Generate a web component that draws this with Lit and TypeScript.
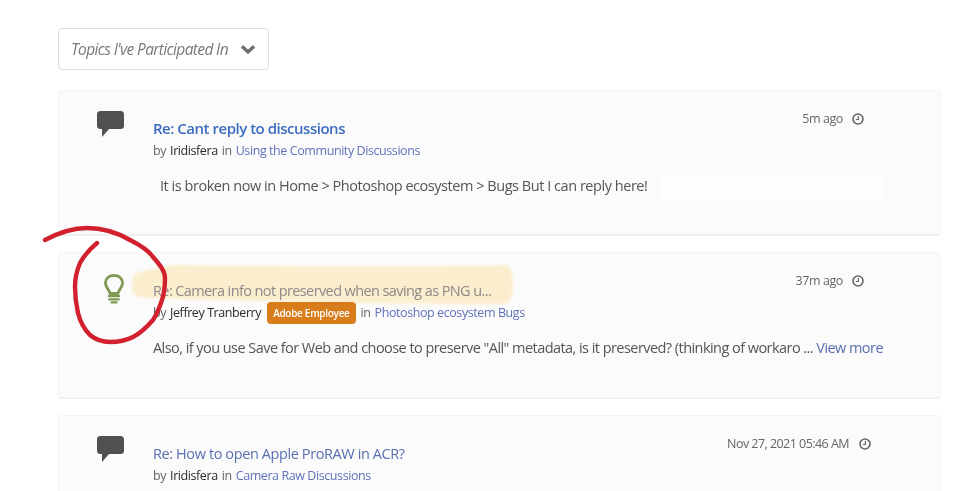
import { LitElement, html, css, svg } from "lit";
import { customElement } from "lit/decorators.js";

const clock = html`<svg class="clock" viewBox="0 0 12 12" aria-hidden="true"><circle cx="6" cy="6" r="5" fill="none" stroke="#666" stroke-width="1.6"/><path d="M6.4 2.9V6.5H3.8" fill="none" stroke="#666" stroke-width="1.2"/></svg>`;
const bubble = html`<svg class="icon bubble" viewBox="0 0 27 27" aria-hidden="true"><path d="M3.5 0H23.5Q27 0 27 3.5V14.5Q27 18 23.5 18H12L5 26V18H3.5Q0 18 0 14.5V3.5Q0 0 3.5 0Z" fill="#505050"/></svg>`;
const bulb = html`<svg class="icon bulb" viewBox="0 0 20 30" aria-hidden="true"><path d="M6 19.5C5.5 15.5 1.4 14 1.4 8.8C1.4 4.4 5 1.4 10 1.4C15 1.4 18.6 4.4 18.6 8.8C18.6 14 14.5 15.5 14 19.5Z" fill="none" stroke="#7f9a55" stroke-width="2.8" stroke-linejoin="round"/><path d="M4.8 22.2H15.2M5.2 25.4H14.8M7.5 28.4H12.5" fill="none" stroke="#7f9a55" stroke-width="2.2" stroke-linecap="round"/></svg>`;

@customElement("app-root")
export class AppRoot extends LitElement {
  static styles = css`
    :host { display: block; position: relative; height: 491px; overflow: hidden; background: #fff; font-family: "Open Sans", "Liberation Sans", sans-serif; color: #555; }
    .page { padding: 28px 36px 0 58px; display: flex; flex-direction: column; align-items: stretch; }
    .select { align-self: flex-start; box-sizing: border-box; width: 211px; height: 42px; display: flex; align-items: center; justify-content: space-between; padding: 0 12px; border: 1px solid #dedede; border-radius: 4px; font-style: italic; font-size: 15.5px; letter-spacing: -0.62px; color: #7a7a7a; margin-bottom: 20px; }
    .chev { width: 16px; height: 11px; }
    .card { position: relative; box-sizing: border-box; min-height: 146px; margin-bottom: 16px; display: flex; padding: 20px 0 0 38px; background: #fbfbfb; border: 1px solid #f4f4f4; border-bottom: 2px solid #f0f0f0; border-radius: 4px; }
    .card.tall { min-height: 147px; }
    .iconcol { width: 56px; flex: none; }
    .icon { display: block; }
    .bubble { width: 27px; height: 27px; }
    .bulb { width: 20px; height: 30px; margin: 1px 0 0 7px; }
    .main { flex: 1; min-width: 0; }
    .head { display: flex; justify-content: space-between; align-items: flex-start; }
    .title { font-size: 14.5px; line-height: 20px; margin-top: 8px; letter-spacing: -0.4px; color: #5a6fb0; }
    .title.bold { font-size: 15px; font-weight: 600; color: #3b6cc0; letter-spacing: -0.48px; margin-top: 7px; margin-bottom: 1px; }
    .title.faded { color: #8e90a8; letter-spacing: -0.6px; }
    .sub { font-size: 12.5px; line-height: 24px; letter-spacing: -0.42px; color: #666; display: flex; align-items: center; gap: 4px; white-space: pre; }
    .name { color: #2c2c2c; }
    .link { color: #6072bb; }
    .badge { background: #d97d1c; color: #fff; font-size: 10px; font-weight: 600; line-height: 22px; height: 22px; padding: 0 6px; border-radius: 4px; letter-spacing: -0.3px; margin: 0 1px 0 2px; }
    .time { display: flex; align-items: center; gap: 9px; font-size: 12.5px; line-height: 16px; letter-spacing: -0.4px; color: #666; margin-right: 76px; }
    .time.wide { margin-right: 69px; gap: 10px; letter-spacing: -0.54px; }
    .clock { width: 12px; height: 12px; }
    .body { position: relative; font-size: 14.5px; line-height: 24px; margin-top: 11px; letter-spacing: -0.46px; color: #555; white-space: nowrap; }
    .body.indent { padding-left: 7px; }
    .body.tight { letter-spacing: -0.55px; }
    .more { color: #5a6fb0; }
    .erase { position: absolute; left: 602px; top: 80px; width: 224px; height: 30px; background: #fdfdfd; }
    .marks { position: absolute; inset: 0; width: 977px; height: 491px; pointer-events: none; }
    .marker { mix-blend-mode: multiply; filter: blur(1.5px); }
  `;

  render() {
    return html`
      <div class="page">
        <div class="select">
          <span>Topics I've Participated In</span>
          <svg class="chev" viewBox="0 0 16 11" aria-hidden="true"><path d="M2 2.2L8 8L14 2.2" fill="none" stroke="#6e6e6e" stroke-width="3.4"/></svg>
        </div>

        <div class="card">
          <div class="erase"></div>
          <div class="iconcol">${bubble}</div>
          <div class="main">
            <div class="head">
              <div>
                <div class="title bold">Re: Cant reply to discussions</div>
                <div class="sub"><span>by</span><span class="name">Iridisfera</span><span>in</span><span class="link">Using the Community Discussions</span></div>
              </div>
              <div class="time">5m ago ${clock}</div>
            </div>
            <div class="body indent">It is broken now in Home &gt; Photoshop ecosystem &gt; Bugs But I can reply here!</div>
          </div>
        </div>

        <div class="card tall">
          <div class="iconcol">${bulb}</div>
          <div class="main">
            <div class="head">
              <div>
                <div class="title faded">Re: Camera info not preserved when saving as PNG u...</div>
                <div class="sub"><span>by</span><span class="name">Jeffrey Tranberry</span><span class="badge">Adobe Employee</span><span>in</span><span class="link">Photoshop ecosystem Bugs</span></div>
              </div>
              <div class="time">37m ago ${clock}</div>
            </div>
            <div class="body tight">Also, if you use Save for Web and choose to preserve "All" metadata, is it preserved? (thinking of workaro ... <span class="more">View more</span></div>
          </div>
        </div>

        <div class="card">
          <div class="iconcol">${bubble}</div>
          <div class="main">
            <div class="head">
              <div>
                <div class="title">Re: How to open Apple ProRAW in ACR?</div>
                <div class="sub"><span>by</span><span class="name">Iridisfera</span><span>in</span><span class="link">Camera Raw Discussions</span></div>
              </div>
              <div class="time wide">Nov 27, 2021 05:46 AM ${clock}</div>
            </div>
          </div>
        </div>
      </div>

      <svg class="marks" viewBox="0 0 977 491" aria-hidden="true">
        ${svg`<path class="marker" d="M133 276C140 270 160 268 172 265C260 266 400 268 505 265C511 266 513 272 513 285C513 295 512 301 505 304C400 305 250 301 150 298C140 298 133 296 132 290Z" fill="#fff2d2"/>`}
        ${svg`<path d="M45 240C60 232 72 228 87 228C105 228 118 233 130 240C142 246 149 251 153 257C160 265 165 271 165 278C165 288 164 294 162 300C159 309 157 314 153 320C146 328 141 333 133 337C125 341 118 342 110 342C102 342 96 340 90 335C84 329 80 321 78 313C76 304 75 296 75 287C75 278 77 270 80 263C85 254 91 248 97 243" fill="none" stroke="#d2202f" stroke-width="4.4" stroke-linecap="round" stroke-linejoin="round"/>`}
      </svg>
    `;
  }
}
